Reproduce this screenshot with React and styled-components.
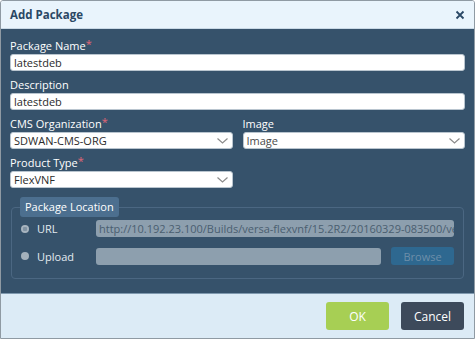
import styled, { createGlobalStyle } from "styled-components";

const Global = createGlobalStyle`
  html, body { margin: 0; padding: 0; background: #ffffff; }
  body { font-family: "Open Sans", "Liberation Sans", sans-serif; }
  * { box-sizing: border-box; }
`;

const Dialog = styled.div`
  width: 475px;
  height: 339px;
  border: 1px solid #8f9aa3;
  border-radius: 3px 3px 0 0;
  display: flex;
  flex-direction: column;
  overflow: hidden;
`;

const Header = styled.div`
  height: 28px;
  flex: none;
  background: #e9f4fc;
  border-bottom: 1px solid #c9d9e6;
  display: flex;
  align-items: center;
  justify-content: space-between;
  padding: 0 9px 0 9px;
  color: #2a4865;
  font-size: 11.5px;
  font-weight: 700;
`;

const Close = styled.button`
  border: 0;
  background: none;
  padding: 0;
  width: 10px;
  height: 10px;
  display: flex;
  cursor: pointer;
`;

const Body = styled.div`
  flex: 1;
  background: #36526b;
  padding: 10px 9px 0;
  display: flex;
  flex-direction: column;
  gap: 7px;
`;

const Row = styled.div`
  display: grid;
  grid-template-columns: ${(p) => (p.$split ? "1fr 1fr" : "1fr")};
  column-gap: 10px;
`;

const Field = styled.div`
  display: flex;
  flex-direction: column;
  gap: 1px;
`;

const Label = styled.label`
  color: #ffffff;
  font-size: 11px;
  line-height: 14px;
  height: 14px;
  sup {
    color: #e06676;
    font-size: 11px;
    vertical-align: top;
    line-height: 10px;
  }
`;

const Input = styled.input`
  height: 17px;
  width: 100%;
  border: 1px solid #b9c5cf;
  border-radius: 3px;
  background: #ffffff;
  font-family: inherit;
  font-size: 11px;
  color: #2b2b2b;
  padding: 0 3px;
  outline: none;
`;

const SelectBox = styled.div`
  height: 17px;
  border: 1px solid #b9c5cf;
  border-radius: 3px;
  background: #ffffff;
  display: flex;
  align-items: center;
  justify-content: space-between;
  padding: 0 4px 0 3px;
  font-size: 11px;
  color: ${(p) => (p.$placeholder ? "#4a4a4a" : "#2b2b2b")};
`;

const Fieldset = styled.fieldset`
  margin: 2px 1px 0;
  border: 1px solid #4b6782;
  border-radius: 4px;
  padding: 0 9px 13px 8px;
  display: flex;
  flex-direction: column;
  gap: 10px;
`;

const Legend = styled.legend`
  background: #4c6f8f;
  color: #ffffff;
  font-size: 11px;
  line-height: 20px;
  height: 20px;
  padding: 0 5px;
  border-radius: 3px;
  margin-bottom: 3px;
`;

const LocRow = styled.div`
  display: grid;
  grid-template-columns: 66px 1fr ${(p) => (p.$browse ? "63px" : "")};
  column-gap: 10px;
  align-items: center;
`;

const Radio = styled.span`
  display: flex;
  align-items: center;
  gap: 8px;
  color: #e3eaf0;
  font-size: 11px;
  padding-left: 1px;
  &::before {
    content: "";
    width: 8px;
    height: 8px;
    border-radius: 50%;
    background: ${(p) =>
      p.$checked
        ? "radial-gradient(circle, #8193a3 0 2px, #a7b4bf 2.5px)"
        : "#a4b1bc"};
  }
`;

const Disabled = styled.div`
  height: 17px;
  border-radius: 3px;
  background: #8d9fae;
  color: #4a5e70;
  font-size: 11px;
  line-height: 17px;
  padding: 0 3px;
  white-space: nowrap;
  overflow: hidden;
`;

const Browse = styled.div`
  height: 18px;
  border-radius: 3px;
  background: #2e6890;
  color: #6d8ea9;
  font-size: 11px;
  display: flex;
  align-items: center;
  justify-content: center;
`;

const Footer = styled.div`
  height: 45px;
  flex: none;
  background: #dcebf6;
  border-top: 1px solid #7f99af;
  display: flex;
  align-items: center;
  justify-content: flex-end;
  gap: 12px;
  padding: 0 10px 0 0;
`;

const Button = styled.button`
  width: 63px;
  height: 28px;
  border: 0;
  border-radius: 3px;
  font-family: inherit;
  font-size: 12px;
  color: #ffffff;
  background: ${(p) => (p.$primary ? "#a7cf54" : "#3d4a5b")};
  cursor: pointer;
`;

const Chevron = () => (
  <svg width="11" height="6" viewBox="0 0 11 6">
    <polyline points="0.5,0.5 5.5,5 10.5,0.5" fill="none" stroke="#8c8c8c" strokeWidth="1.2" />
  </svg>
);

const Select = ({ value, placeholder }) => (
  <SelectBox $placeholder={placeholder}>
    <span>{value}</span>
    <Chevron />
  </SelectBox>
);

export default function App() {
  return (
    <>
      <Global />
      <Dialog>
        <Header>
          <span>Add Package</span>
          <Close aria-label="close">
            <svg width="10" height="10" viewBox="0 0 10 10">
              <path d="M1.5 1.5 L8.5 8.5 M8.5 1.5 L1.5 8.5" stroke="#2a4865" strokeWidth="1.8" />
            </svg>
          </Close>
        </Header>
        <Body>
          <Field>
            <Label>
              Package Name<sup>*</sup>
            </Label>
            <Input defaultValue="latestdeb" />
          </Field>
          <Field>
            <Label>Description</Label>
            <Input defaultValue="latestdeb" />
          </Field>
          <Row $split>
            <Field>
              <Label>
                CMS Organization<sup>*</sup>
              </Label>
              <Select value="SDWAN-CMS-ORG" />
            </Field>
            <Field>
              <Label>Image</Label>
              <Select value="Image" placeholder />
            </Field>
          </Row>
          <Row $split>
            <Field>
              <Label>
                Product Type<sup>*</sup>
              </Label>
              <Select value="FlexVNF" />
            </Field>
          </Row>
          <Fieldset>
            <Legend>Package Location</Legend>
            <LocRow>
              <Radio $checked>URL</Radio>
              <Disabled>http://10.192.23.100/Builds/versa-flexvnf/15.2R2/20160329-083500/ver</Disabled>
            </LocRow>
            <LocRow $browse>
              <Radio>Upload</Radio>
              <Disabled />
              <Browse>Browse</Browse>
            </LocRow>
          </Fieldset>
        </Body>
        <Footer>
          <Button $primary>OK</Button>
          <Button>Cancel</Button>
        </Footer>
      </Dialog>
    </>
  );
}
